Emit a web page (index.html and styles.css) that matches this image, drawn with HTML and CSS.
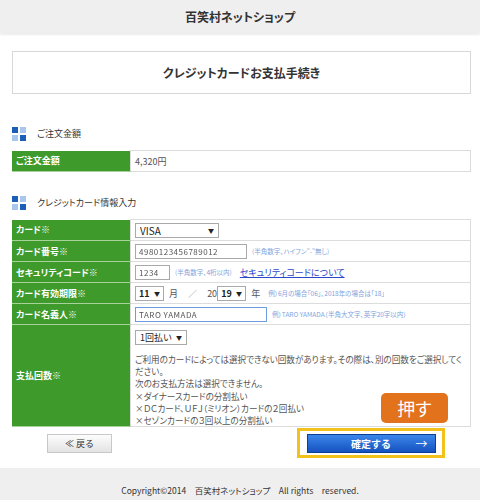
FILE: index.html
```html
<!DOCTYPE html>
<html lang="ja">

<head>
    <meta charset="UTF-8">
    <meta name="viewport" content="width=device-width, initial-scale=1.0">
    <title>クレジットカードお支払手続き</title>
    <link rel="stylesheet" href="styles.css">
</head>

<body>
    <header class="site-header">百笑村ネットショップ</header>

    <main class="main">
        <h1 class="page-title">クレジットカードお支払手続き</h1>

        <h2 class="section-head"><span class="sq-icon"><i class="dk"></i><i></i><i></i><i class="dk"></i></span>ご注文金額</h2>
        <table class="form-table">
            <tr class="row">
                <th>ご注文金額</th>
                <td>4,320円</td>
            </tr>
        </table>

        <h2 class="section-head head-card"><span class="sq-icon"><i class="dk"></i><i></i><i></i><i class="dk"></i></span>クレジットカード情報入力</h2>
        <table class="form-table">
            <tr class="row">
                <th>カード※</th>
                <td>
                    <label class="select sel-card"><select><option>VISA</option><option>MasterCard</option><option>JCB</option></select></label>
                </td>
            </tr>
            <tr class="row">
                <th>カード番号※</th>
                <td>
                    <input class="field field-number masked" type="text" value="4980123456789012">
                    <span class="note">(半角数字、ハイフン"-"無し)</span>
                </td>
            </tr>
            <tr class="row">
                <th>セキュリティコード※</th>
                <td>
                    <input class="field field-code masked" type="text" value="1234">
                    <span class="note">(半角数字、4桁以内)</span>
                    <a class="help-link" href="#">セキュリティコードについて</a>
                </td>
            </tr>
            <tr class="row">
                <th>カード有効期限※</th>
                <td>
                    <label class="select sel-small"><select><option>11</option></select></label>
                    <span class="unit">月</span>
                    <span class="unit slash">／</span>
                    <span class="unit century">20</span><label class="select sel-small"><select><option>19</option></select></label>
                    <span class="unit">年</span>
                    <span class="note">例）6月の場合「06」、2018年の場合は「18」</span>
                </td>
            </tr>
            <tr class="row">
                <th>カード名義人※</th>
                <td>
                    <input class="field field-name masked" type="text" value="TARO YAMADA">
                    <span class="note">例）TARO YAMADA（半角大文字､英字20字以内）</span>
                </td>
            </tr>
            <tr class="row-tall">
                <th>支払回数※</th>
                <td>
                    <label class="select sel-times"><select><option>1回払い</option><option>3回払い</option></select></label>
                    <p class="pay-note">ご利用のカードによっては選択できない回数があります。その際は、別の回数をご選択してください。<br>
                        次のお支払方法は選択できません。<br>
                        ×ダイナースカードの分割払い<br>
                        ×ＤＣカード、ＵＦＪ（ミリオン）カードの２回払い<br>
                        ×セゾンカードの３回以上の分割払い</p>
                    <span class="push-badge">押す</span>
                </td>
            </tr>
        </table>

        <div class="actions">
            <button class="btn-back">≪ 戻る</button>
            <div class="confirm-frame">
                <button class="btn-confirm">確定する<span class="arrow">→</span></button>
            </div>
        </div>
    </main>

    <footer class="site-footer">Copyright©2014　百笑村ネットショップ　All rights　reserved.</footer>
</body>

</html>
```

FILE: styles.css
```css
body {
    margin: 0;
    font-family: "Noto Sans CJK JP", sans-serif;
    font-feature-settings: "palt";
    color: #333;
    background-color: #fff;
}

.site-header {
    height: 33px;
    background-color: #efefef;
    box-shadow: 0 2px 2px rgba(0, 0, 0, 0.08);
    display: flex;
    align-items: center;
    justify-content: center;
    font-size: 12px;
    font-weight: bold;
    color: #333;
}

.main {
    padding: 18px 9px 0 12px;
}

.page-title {
    margin: 0;
    height: 41px;
    border: 1px solid #d8d8d8;
    display: flex;
    align-items: center;
    justify-content: center;
    font-size: 12px;
    font-weight: bold;
}

.section-head {
    margin: 33px 0 0;
    height: 14px;
    display: flex;
    align-items: center;
    gap: 11px;
    font-size: 9px;
    font-weight: normal;
    line-height: 14px;
    color: #333;
}

.head-card {
    margin-top: 24px;
}

.sq-icon {
    flex: none;
    width: 14px;
    height: 14px;
    display: grid;
    grid-template-columns: 6px 6px;
    grid-template-rows: 6px 6px;
    gap: 2px;
}

.sq-icon i {
    background-color: #a9c6ec;
}

.sq-icon i.dk {
    background-color: #1b5fb8;
}

.form-table {
    width: 100%;
    margin-top: 9px;
    border-collapse: collapse;
    font-size: 9px;
    line-height: 13px;
}

.form-table .row {
    height: 21px;
}

.form-table th {
    width: 110px;
    height: 20px;
    padding: 0 4px;
    background-color: #3d9a2b;
    color: #fff;
    font-weight: bold;
    text-align: left;
    border-bottom: 1px solid #a7d39a;
}

.form-table td {
    height: 19px;
    padding: 0 4px;
    border: 1px solid #dcdcdc;
    color: #555;
    white-space: nowrap;
}

.row-tall {
    height: 100px;
}

.row-tall td {
    height: 93px;
    position: relative;
    vertical-align: top;
    padding-top: 5px;
    padding-bottom: 0;
    white-space: normal;
}

.select {
    display: inline-block;
    position: relative;
    height: 15px;
    vertical-align: middle;
}

.select::after {
    content: "▼";
    position: absolute;
    right: 5px;
    top: 1px;
    font-size: 6px;
    color: #222;
    pointer-events: none;
}

.select select {
    appearance: none;
    display: block;
    box-sizing: border-box;
    width: 100%;
    height: 15px;
    margin: 0;
    padding: 0 4px;
    border: 1px solid #a9a9a9;
    background-color: #fff;
    font-family: inherit;
    font-size: 10px;
    line-height: 13px;
    color: #222;
}

.sel-card {
    width: 84px;
}

.sel-small {
    width: 29px;
}

.sel-small select {
    padding: 0 3px;
    font-size: 9px;
    font-weight: bold;
}

.sel-small::after {
    right: 4px;
}

.sel-times {
    width: 52px;
}

.sel-times select {
    font-size: 9px;
}

.field {
    box-sizing: border-box;
    height: 15px;
    margin: 0;
    padding: 0 3px;
    border: 1px solid #a9a9a9;
    font-family: inherit;
    font-size: 8px;
    color: #555;
    vertical-align: middle;
}

.masked {
    filter: blur(0.7px);
    letter-spacing: 0.5px;
}

.field-number {
    width: 112px;
}

.field-code {
    width: 35px;
}

.field-name {
    width: 132px;
    border-color: #6f9be0;
}

.note {
    margin-left: 3px;
    font-size: 6.5px;
    color: #7fa3dc;
    vertical-align: middle;
}

.help-link {
    margin-left: 6px;
    font-size: 9px;
    color: #2b47c9;
    vertical-align: middle;
}

.unit {
    margin: 0 3px;
    font-size: 9px;
    color: #555;
    vertical-align: middle;
}

.slash {
    margin: 0 5px;
    color: #999;
}

.century {
    margin-right: 0;
}

.pay-note {
    margin: 8px 0 0;
    font-size: 8.6px;
    line-height: 12.2px;
    letter-spacing: -0.05px;
    color: #555;
}

.push-badge {
    position: absolute;
    left: 250px;
    bottom: 3px;
    width: 67px;
    height: 30px;
    border-radius: 5px;
    background-color: #e2721b;
    color: #fff;
    font-size: 18px;
    line-height: 30px;
    text-align: center;
}

.actions {
    display: flex;
    justify-content: space-between;
    align-items: center;
    margin-top: 1px;
    padding: 0 26px 0 35px;
}

.btn-back {
    width: 65px;
    height: 19px;
    padding: 0;
    border: 1px solid #c8c8c8;
    background: linear-gradient(#fdfdfd, #e3e3e3);
    font-family: inherit;
    font-size: 9px;
    color: #333;
}

.confirm-frame {
    box-sizing: border-box;
    width: 148px;
    height: 30px;
    border: 3px solid #f2c21b;
    display: flex;
    align-items: center;
    justify-content: center;
}

.btn-confirm {
    position: relative;
    width: 129px;
    height: 19px;
    padding: 0;
    border: 1px solid #0c3f94;
    background: linear-gradient(#3b86ea, #1552c0);
    color: #fff;
    font-family: inherit;
    font-size: 10px;
    font-weight: bold;
}

.arrow {
    position: absolute;
    right: 7px;
    top: 0;
    font-size: 12px;
    font-weight: normal;
    line-height: 17px;
}

.site-footer {
    margin-top: 10px;
    height: 40px;
    padding-top: 16px;
    box-sizing: border-box;
    background-color: #efefef;
    text-align: center;
    font-size: 8.5px;
    color: #333;
}
```
